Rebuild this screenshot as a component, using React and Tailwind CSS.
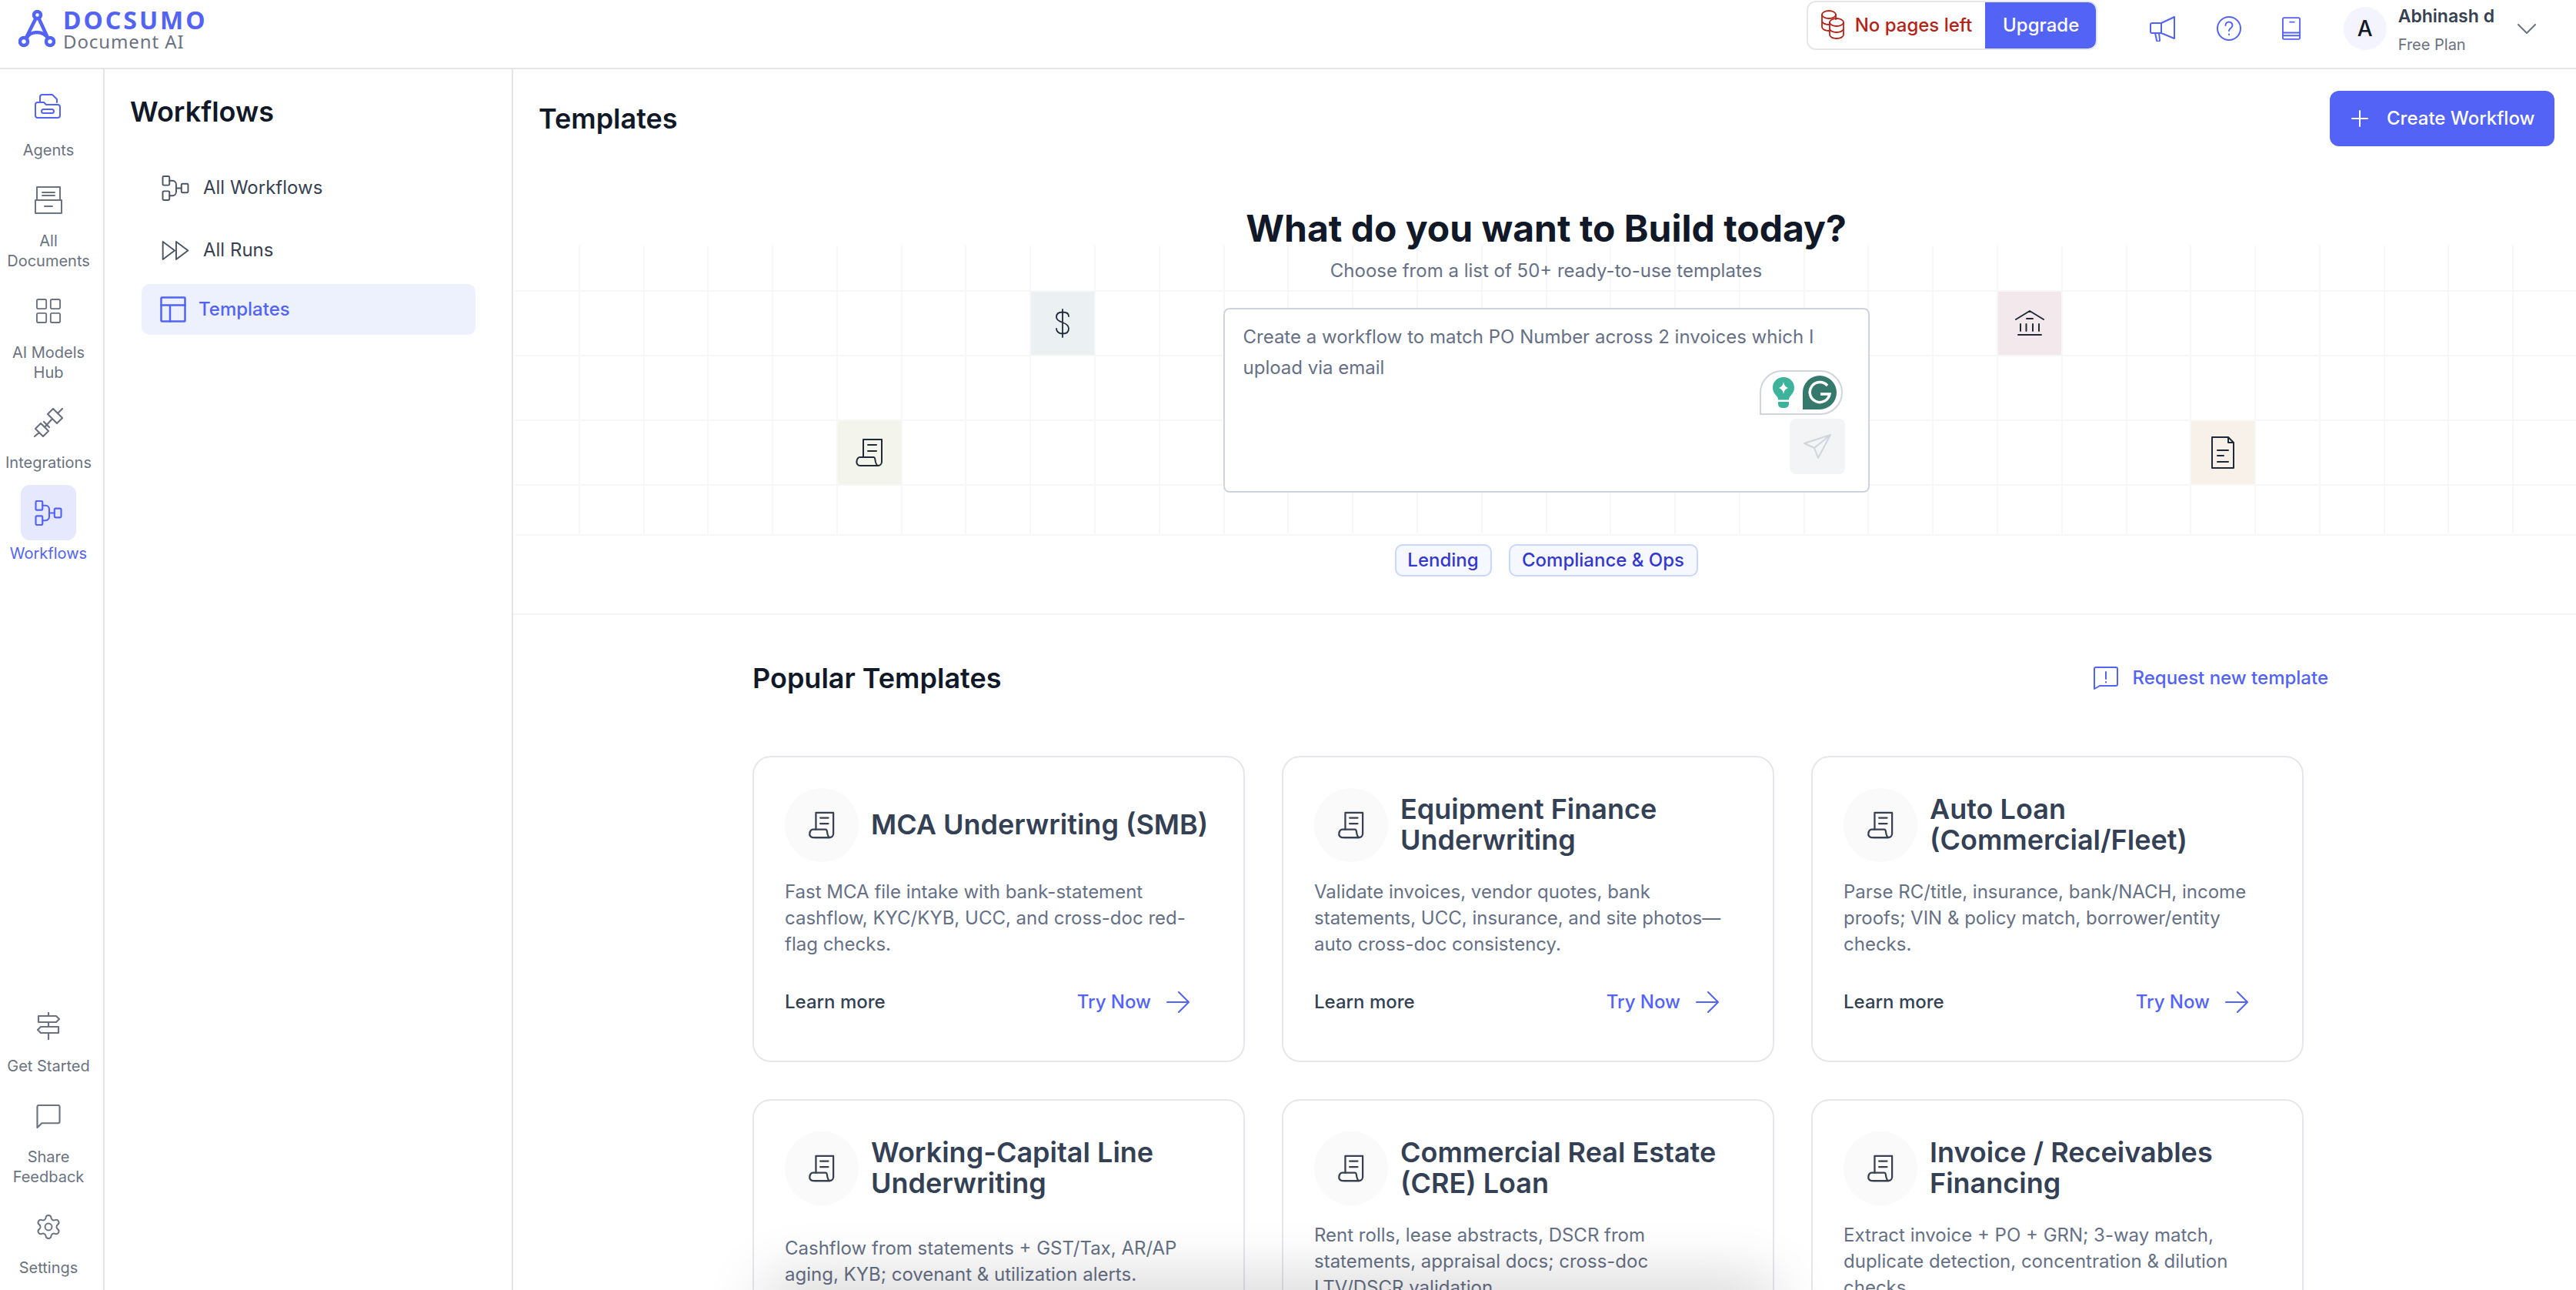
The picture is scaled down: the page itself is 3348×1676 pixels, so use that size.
import React from "react";

const S = (p) => <svg fill="none" stroke="currentColor" strokeLinecap="round" strokeLinejoin="round" {...p} />;

const FlowIcon = ({ className, sw = 2 }) => (
  <S viewBox="0 0 36 34" strokeWidth={sw} className={className}>
    <rect x="1" y="1" width="9" height="12" rx="1.5" />
    <rect x="1" y="21" width="9" height="12" rx="1.5" />
    <rect x="26" y="11" width="9" height="12" rx="1.5" />
    <path d="M10 7h4a5 5 0 0 1 5 5v10a5 5 0 0 1-5 5h-4M19 17h7" />
  </S>
);

const Receipt = ({ className, sw = 2 }) => (
  <S viewBox="0 0 36 38" strokeWidth={sw} className={className}>
    <path d="M10 25V2h24v29a5 5 0 0 1-5 5H8" />
    <path d="M8 36H6a4.500 4.500 0 0 1-4.500-5.500c0-3 2-5.500 4-5.500h18c1 0 1.500 1 1.700 2 .5 4 1.300 9 4.300 9H8Z" />
    <path d="M16 9h11M16 17h11" />
  </S>
);

const Rail = ({ icon, label, mt, active }) => (
  <div className="flex flex-col items-center w-full">
    <div className={`w-[72px] h-[72px] rounded-xl flex items-center justify-center ${active ? "bg-[#e6e8fd] text-[#5263f5]" : "text-[#6b7280]"}`}>{icon}</div>
    <div className={`${mt} text-center text-[20px] leading-[26px] ${active ? "text-[#5263f5]" : "text-[#6b7280]"}`}>{label}</div>
  </div>
);

const NavItem = ({ icon, label }) => (
  <div className="flex items-center gap-[18px] pl-[26px] text-[#374151] text-[24px] h-[34px]">
    {icon}
    <span>{label}</span>
  </div>
);

const cards = [
  ["MCA Underwriting (SMB)", "Fast MCA file intake with bank-statement cashflow, KYC/KYB, UCC, and cross-doc red-flag checks."],
  ["Equipment Finance Underwriting", "Validate invoices, vendor quotes, bank statements, UCC, insurance, and site photos—auto cross-doc consistency."],
  ["Auto Loan (Commercial/Fleet)", "Parse RC/title, insurance, bank/NACH, income proofs; VIN & policy match, borrower/entity checks."],
  ["Working-Capital Line Underwriting", "Cashflow from statements + GST/Tax, AR/AP aging, KYB; covenant & utilization alerts."],
  ["Commercial Real Estate (CRE) Loan", "Rent rolls, lease abstracts, DSCR from statements, appraisal docs; cross-doc LTV/DSCR validation."],
  ["Invoice / Receivables Financing", "Extract invoice + PO + GRN; 3-way match, duplicate detection, concentration & dilution checks."],
];

const Card = ({ title, desc }) => (
  <div className="h-[398px] shrink-0 rounded-[24px] border-2 border-[#e5e7eb] p-[40px] flex flex-col bg-white">
    <div className="flex items-center gap-[16px] h-[96px] shrink-0">
      <div className="w-[96px] h-[96px] rounded-full bg-[#fafafa] flex items-center justify-center shrink-0 text-[#374151]">
        <Receipt className="w-[34px] h-[36px]" sw={2.4} />
      </div>
      <div className="text-[36px] leading-[40px] font-semibold text-[#344054] pb-[3px]">{title}</div>
    </div>
    <div className="h-[136px] flex items-center shrink-0 mt-[5px]">
      <p className="text-[24px] leading-[34px] text-[#667085]">{desc}</p>
    </div>
    <div className="flex items-center justify-between pt-[23px] pr-[30px]">
      <span className="text-[24px] font-medium text-[#344054]">Learn more</span>
      <span className="flex items-center gap-[20px] text-[24px] font-medium text-[#5263f5]">
        Try Now
        <S viewBox="0 0 30 28" strokeWidth="2" className="w-[30px] h-[28px]"><path d="M1 14h28M16 1l13 13-13 13" /></S>
      </span>
    </div>
  </div>
);

const gridCells = Array.from({ length: 160 }, (_, i) => i);
const tints = { 40: "bg-[#ebf0f2]", 55: "bg-[#f3e9ed]", 101: "bg-[#f3f5ec]", 122: "bg-[#f7f1ea]" };

const CellIcons = {
  40: <S viewBox="0 0 20 38" strokeWidth="1.8" className="w-[20px] h-[38px] text-[#1f2937]"><path d="M10 1v36M18 10c0-4-3.500-5.500-8-5.500S2 6.500 2 11c0 4 3.500 5.500 8 7 4.500 1.500 8 3.500 8 8s-3.500 6.500-8 6.500S2 30 2 26" /></S>,
  55: <S viewBox="0 0 38 34" strokeWidth="2" className="w-[38px] h-[34px] text-[#1f2937]"><path d="M1 12 19 1l18 11M15 11h8M7 18v9M14.500 18v9M23 18v9M31 18v9M4 32h30" /></S>,
  101: <Receipt className="w-[36px] h-[38px] text-[#1f2937]" />,
  122: <S viewBox="0 0 32 42" strokeWidth="2" className="w-[32px] h-[42px] text-[#1f2937]"><path d="M23 1H2v40h28V8l-7-7v7h7M9 18h14M9 25h8M9 33h14" /></S>,
};

export default function App() {
  return (
    <div className="w-[3348px] h-[1676px] overflow-hidden flex flex-col bg-white font-['Inter',sans-serif] relative">
      {/* Top bar */}
      <header className="h-[90px] shrink-0 border-b-2 border-[#e5e5e5] flex items-start pl-[24px] pr-[52px]">
        <div className="flex items-center gap-[10px] h-[76px]">
          <svg viewBox="0 0 48 50" className="w-[48px] h-[50px] text-[#5263f5]" fill="none" stroke="currentColor" strokeWidth="4.500">
            <circle cx="24.500" cy="6.500" r="4.500" />
            <circle cx="7" cy="41" r="5" />
            <circle cx="41" cy="41" r="5" />
            <path d="M22.500 11 10 36M26.500 11 38 36M10 38c2-6 8-9 14-9s12 3 15 9" />
          </svg>
          <div className="flex flex-col font-['Noto_Sans',sans-serif]">
            <span className="text-[32px] leading-[32px] font-bold text-[#5263f5] tracking-[3px]">DOCSUMO</span>
            <span className="text-[24px] leading-[24px] text-[#6b7280] tracking-[0.900px]">Document AI</span>
          </div>
        </div>
        <div className="ml-auto flex items-start h-[74px] pt-[1px]">
          <div className="flex h-[64px] w-[378px] rounded-[12px] border-2 border-[#e5e7eb] overflow-hidden">
            <div className="flex-1 flex items-center gap-[13px] pl-[16px] text-[#b42318] text-[24px] font-medium">
              <S viewBox="0 0 32 40" strokeWidth="1.800" className="w-[32px] h-[40px]">
                <ellipse cx="11" cy="6" rx="9" ry="5" />
                <path d="M2 6v8c0 3 4 5 9 5M2 14v8c0 3 4 5 9 5M20 6v6" />
                <ellipse cx="21" cy="16" rx="9" ry="5" />
                <path d="M12 16v16c0 3 4 5 9 5s9-2 9-5V16M12 24c0 3 4 5 9 5s9-2 9-5" />
              </S>
              No pages left
            </div>
            <div className="w-[146px] -my-[2px] -mr-[2px] bg-[#5263f5] text-white flex items-center justify-center text-[24px] font-medium">Upgrade</div>
          </div>
          <div className="flex items-center gap-[53px] ml-[68px] h-[72px] text-[#5263f5]">
            <S viewBox="0 0 34 34" strokeWidth="2" className="w-[34px] h-[34px]"><path d="M3 10h12L32 2v28l-17-7H3a2 2 0 0 1-2-2v-9a2 2 0 0 1 2-2ZM15 10v13M7 23l2 9a2 2 0 0 0 4 0l-1-9" /></S>
            <S viewBox="0 0 32 32" strokeWidth="2" className="w-[32px] h-[32px]"><circle cx="16" cy="16" r="15" /><path d="M11.500 12a4.500 4.500 0 0 1 9 0c0 3.500-4.500 4-4.500 7M16 23.500v.5" /></S>
            <S viewBox="0 0 26 32" strokeWidth="2" className="w-[24px] h-[32px]"><path d="M3 1h20a2 2 0 0 1 2 2v26a2 2 0 0 1-2 2H3a2 2 0 0 1-2-2V3a2 2 0 0 1 2-2ZM1 22h24M1 26h24M11 7h6" /></S>
          </div>
          <div className="ml-[56px] w-[56px] h-[56px] mt-[8px] rounded-full bg-[#f3f4fd] flex items-center justify-center text-[28px] font-medium text-[#111827]">A</div>
          <div className="ml-[15px] flex flex-col mt-[3px]">
            <span className="text-[23px] leading-[34px] font-semibold text-[#374151]">Abhinash d</span>
            <span className="text-[20px] leading-[40px] text-[#6b7280]">Free Plan</span>
          </div>
          <S viewBox="0 0 24 14" strokeWidth="2" className="w-[24px] h-[14px] ml-[30px] mt-[30px] text-[#6b7280]"><path d="m1 1 11 11L23 1" /></S>
        </div>
      </header>

      <div className="flex flex-1 min-h-0">
        {/* Rail */}
        <aside className="w-[136px] shrink-0 border-r-2 border-[#e5e5e5] flex flex-col justify-between pt-[12px] pb-[16px] pr-[8px]">
          <div className="flex flex-col gap-[16px]">
            <Rail mt="mt-[8px]" label="Agents" icon={
              <span className="text-[#5263f5] -ml-[3px]"><S viewBox="0 0 34 32" strokeWidth="2" className="w-[34px] h-[32px]"><path d="M7 11V4a3 3 0 0 1 3-3h13l6 6v4M1 14a3 3 0 0 1 3-3h8l3 3h15a3 3 0 0 1 3 3v11a3 3 0 0 1-3 3H4a3 3 0 0 1-3-3Z" /><rect x="9" y="20" width="16" height="5" rx="2.500" /></S></span>
            } />
            <Rail mt="mt-[4px]" label={<>All<br />Documents</>} icon={
              <S viewBox="0 0 36 36" strokeWidth="2" className="w-[36px] h-[36px]"><path d="M3 18V1h30v17M1 18h34v17H1ZM10 8h16M10 12h16M13 26h10" /></S>
            } />
            <Rail mt="mt-[5px]" label={<>AI Models<br />Hub</>} icon={
              <S viewBox="0 0 34 34" strokeWidth="2" className="w-[32px] h-[32px]"><rect x="1" y="1" width="13" height="13" rx="2" /><rect x="20" y="1" width="13" height="13" rx="2" /><rect x="1" y="20" width="13" height="13" rx="2" /><rect x="20" y="20" width="13" height="13" rx="2" /></S>
            } />
            <Rail mt="mt-[3px]" label="Integrations" icon={
              <S viewBox="0 0 38 38" strokeWidth="2.200" className="w-[38px] h-[38px]"><path d="M1 37l6-5M37 1l-6 6M2 27l7-7 10 10-7 7ZM18 8l7-7 12 12-7 7ZM14 25l10-11M13 18l7 7" /></S>
            } />
            <Rail mt="mt-[4px]" active label="Workflows" icon={<FlowIcon className="w-[36px] h-[33px]" sw={2.200} />} />
          </div>
          <div className="flex flex-col gap-[16px]">
            <Rail mt="mt-[3px]" label="Get Started" icon={
              <S viewBox="0 0 32 36" strokeWidth="2.200" className="w-[32px] h-[36px]"><path d="M16 1v4M16 13v6M16 27v8M3 5h23l4 4-4 4H3ZM29 19H6l-4 4 4 4h23Z" /></S>
            } />
            <Rail mt="mt-[4px]" label={<>Share<br />Feedback</>} icon={
              <S viewBox="0 0 32 32" strokeWidth="2.200" className="w-[32px] h-[31px]"><path d="M1 3a2 2 0 0 1 2-2h26a2 2 0 0 1 2 2v20a2 2 0 0 1-2 2H7l-6 6Z" /></S>
            } />
            <Rail mt="mt-[4px]" label="Settings" icon={
              <S viewBox="0 0 24 24" strokeWidth="1.300" className="w-[36px] h-[36px]"><path d="M9.671 4.136a2.340 2.340 0 0 1 4.659 0 2.340 2.340 0 0 0 3.319 1.915 2.340 2.340 0 0 1 2.330 4.033 2.340 2.340 0 0 0 0 3.831 2.340 2.340 0 0 1-2.330 4.033 2.340 2.340 0 0 0-3.319 1.915 2.340 2.340 0 0 1-4.659 0 2.340 2.340 0 0 0-3.320-1.915 2.340 2.340 0 0 1-2.330-4.033 2.340 2.340 0 0 0 0-3.831A2.340 2.340 0 0 1 6.350 6.051a2.340 2.340 0 0 0 3.320-1.915" /><circle cx="12" cy="12" r="3" /></S>
            } />
          </div>
        </aside>

        {/* Second panel */}
        <nav className="w-[531px] shrink-0 border-r-2 border-[#e5e5e5] px-[48px] flex flex-col">
          <h2 className="-ml-[15px] mt-[36px] h-[38px] text-[36px] leading-[38px] font-semibold text-[#111827]">Workflows</h2>
          <div className="mt-[63px] flex flex-col">
            <NavItem icon={<FlowIcon className="w-[36px] h-[33px] text-[#4b5563]" />} label="All Workflows" />
            <div className="h-[47px]" />
            <NavItem icon={<S viewBox="0 0 36 26" strokeWidth="2" className="w-[36px] h-[25px] text-[#4b5563]"><path d="M1 1l16 12L1 25ZM19 1l16 12-16 12Z" /></S>} label="All Runs" />
            <div className="h-[27px]" />
            <div className="h-[66px] w-[434px] rounded-[10px] bg-[#ecf1fd] flex items-center gap-[16px] pl-[24px] text-[#5263f5] text-[24px] font-medium">
              <S viewBox="0 0 34 34" strokeWidth="2.500" className="w-[34px] h-[34px]"><rect x="1.500" y="1.500" width="31" height="31" rx="1" /><path d="M1.500 11.500h31M13 11.500v21" /></S>
              Templates
            </div>
          </div>
        </nav>

        {/* Main */}
        <main className="flex-1 min-w-0 flex flex-col relative">
          <div className="relative h-[709px] shrink-0 border-b-2 border-[#f3f4f6]">
            {/* decorative grid */}
            <div className="absolute left-[3px] w-full top-[229px] h-[377px] grid grid-cols-[repeat(32,1fr)] grid-rows-[60px_84px_84px_84px_65px]">
              {gridCells.map((i) => (
                <div key={i} className={`border-r-2 border-b-2 border-[#f7f7f8] flex items-center justify-center ${tints[i] || ""}`}>{CellIcons[i]}</div>
              ))}
            </div>
            <div className="relative">
              <div className="flex items-center justify-between pl-[33px] pr-[28px] pt-[28px]">
                <h1 className="text-[36px] font-semibold text-[#111827] leading-[72px]">Templates</h1>
                <div className="w-[292px] h-[72px] rounded-[12px] bg-[#5263f5] text-white flex items-center pl-[28px] gap-[24px] text-[24px] font-medium">
                  <S viewBox="0 0 22 22" strokeWidth="2" className="w-[22px] h-[22px]"><path d="M11 1v20M1 11h20" /></S>
                  Create Workflow
                </div>
              </div>
              <div className="flex flex-col items-center mt-[78px] pl-[4px]">
                <h2 className="text-[48px] leading-[58px] font-bold text-[#111827]">What do you want to Build today?</h2>
                <p className="text-[24px] leading-[34px] text-[#667085] mt-[9px]">Choose from a list of 50+ ready-to-use templates</p>
                <div className="w-[840px] h-[240px] mt-[31px] rounded-[8px] border-2 border-[#d0d5dd] bg-white px-[24px] pt-[16px] relative">
                  <p className="text-[24px] leading-[40px] text-[#667085]">Create a workflow to match PO Number across 2 invoices which I upload via email</p>
                  <div className="absolute left-[695px] top-[79px] w-[108px] h-[58px] rounded-[29px] rounded-bl-none border-2 border-[#d0d5dd] bg-white flex items-center justify-between pl-[14px] pr-[6px]">
                    <svg viewBox="0 0 30 42" className="w-[30px] h-[42px]"><path d="M15 1C7 1 1 7 1 14.500c0 5 2.500 8 5 11 1.500 2 2 3 2 5h14c0-2 .5-3 2-5 2.500-3 5-6 5-11C29 7 23 1 15 1Z" fill="#3eb39b" /><path d="M15 7c1 5 2.500 6.500 6 8-3.500 1.500-5 3-6 8-1-5-2.500-6.500-6-8 3.500-1.500 5-3 6-8Z" fill="#fff" /><path d="M8 33h14v3a5 5 0 0 1-5 5h-4a5 5 0 0 1-5-5Z" fill="#3eb39b" /></svg>
                    <svg viewBox="0 0 44 44" className="w-[44px] h-[44px]"><path d="M0 22a22 22 0 1 1 22 22H0Z" fill="#35796c" /><path d="M32 13a13 13 0 1 0 3 11H23" fill="none" stroke="#fff" strokeWidth="3.500" /></svg>
                  </div>
                  <div className="absolute left-[734px] top-[142px] w-[72px] h-[72px] rounded-[8px] bg-[#f3f4f6] flex items-center justify-center">
                    <S viewBox="0 0 36 32" strokeWidth="2" className="w-[36px] h-[32px] text-[#d0d5dd]"><path d="M35 1 1 12l13 6 5 13ZM35 1 14 18" /></S>
                  </div>
                </div>
                <div className="flex gap-[22px] mt-[67px]">
                  <span className="h-[42px] w-[126px] rounded-[10px] border-2 border-[#c7d7fe] bg-[#f5f8ff] flex items-center justify-center text-[24px] font-medium text-[#3538cd]">Lending</span>
                  <span className="h-[42px] w-[246px] rounded-[10px] border-2 border-[#c7d7fe] bg-[#f5f8ff] flex items-center justify-center text-[24px] font-medium text-[#3538cd]">Compliance &amp; Ops</span>
                </div>
              </div>
            </div>
          </div>

          <div className="pl-[311px] pr-[354px] flex-1 min-h-0">
            <div className="flex items-center justify-between h-[60px] mt-[52px]">
              <h3 className="text-[36px] font-semibold text-[#111827]">Popular Templates</h3>
              <span className="flex items-center gap-[18px] text-[24px] font-medium text-[#5263f5] -mr-[32px]">
                <S viewBox="0 0 32 30" strokeWidth="2" className="w-[32px] h-[30px]"><path d="M1 3a2 2 0 0 1 2-2h26a2 2 0 0 1 2 2v20a2 2 0 0 1-2 2H8l-7 4ZM16 7v9M16 20v.5" /></S>
                Request new template
              </span>
            </div>
            <div className="grid grid-cols-3 gap-[48px] mt-[71px]">
              {cards.map(([t, d]) => <Card key={t} title={t} desc={d} />)}
            </div>
          </div>
          {/* shadow cast upward by a floating element below the fold */}
          <div className="absolute left-[333px] w-[1300px] -bottom-[40px] h-[40px] rounded-[20px] shadow-[0_0_80px_10px_rgba(0,0,0,0.2)] pointer-events-none" />
        </main>
      </div>
    </div>
  );
}
